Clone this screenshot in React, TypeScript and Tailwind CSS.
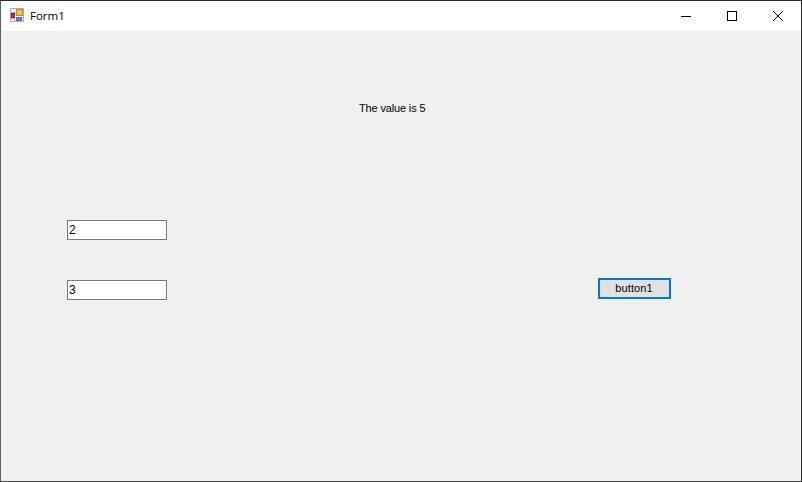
export default function App() {
  return (
    <div className="w-[802px] h-[482px] flex flex-col bg-[#f0f0f0] border border-t-[#2b2b2b] border-r-[#2b2b2b] border-b-[#4a4a4a] border-l-[#5f5f5f] overflow-hidden font-['Liberation_Sans',sans-serif] text-[11px] tracking-[-0.15px] text-black">
      <div className="h-[30px] shrink-0 bg-white flex items-center">
        <svg width="14" height="14" viewBox="0 0 14 14" className="ml-[9px] mt-[-2px]">
          <rect x="0.5" y="0.5" width="13" height="13" fill="#f2f2f2" stroke="#b0b0b0" />
          <path d="M0 10.5H5M4.5 10V14M0 4.5H6" stroke="#b0b0b0" strokeWidth="1" />
          <rect x="6.5" y="1.5" width="6" height="6" fill="#f6c445" stroke="#b98a1e" />
          <rect x="1.5" y="5.5" width="3" height="4" fill="#c8342c" stroke="#8a2420" />
          <rect x="6.5" y="9.5" width="5" height="3" fill="#5b8fd8" stroke="#3f6fb8" />
        </svg>
        <span className="ml-[6px] font-['Open_Sans',sans-serif] text-[11.5px] tracking-normal leading-none">Form1</span>
        <div className="ml-auto flex items-center">
          <div className="w-[46px] h-[30px] flex items-center justify-center">
            <svg width="10" height="10" viewBox="0 0 10 10"><path d="M0 5.5H10" stroke="#000" strokeWidth="1" /></svg>
          </div>
          <div className="w-[46px] h-[30px] flex items-center justify-center">
            <svg width="10" height="10" viewBox="0 0 10 10"><rect x="0.5" y="0.5" width="9" height="9" fill="none" stroke="#000" strokeWidth="1" /></svg>
          </div>
          <div className="w-[46px] h-[30px] flex items-center justify-center">
            <svg width="10" height="10" viewBox="0 0 10 10"><path d="M0 0L10 10M10 0L0 10" stroke="#000" strokeWidth="1" /></svg>
          </div>
        </div>
      </div>
      <div className="flex-1 flex flex-col pt-[70px]">
        <div className="ml-[358px] h-[14px] leading-[14px]">The value is 5</div>
        <div className="mt-[105px] flex items-start">
          <div className="ml-[66px] w-[100px] flex flex-col gap-[40px]">
            <div className="h-[20px] border border-[#7a7a7a] bg-white pl-[1px] text-[12px] leading-[18px]">2</div>
            <div className="h-[20px] border border-[#7a7a7a] bg-white pl-[1px] text-[12px] leading-[18px]">3</div>
          </div>
          <button className="ml-[431px] mt-[58px] w-[73px] h-[21px] border-2 border-[#0078d7] bg-[#e1e1e1] text-center tracking-[0.1px] leading-[17px] pr-[1px]">button1</button>
        </div>
      </div>
    </div>
  );
}
